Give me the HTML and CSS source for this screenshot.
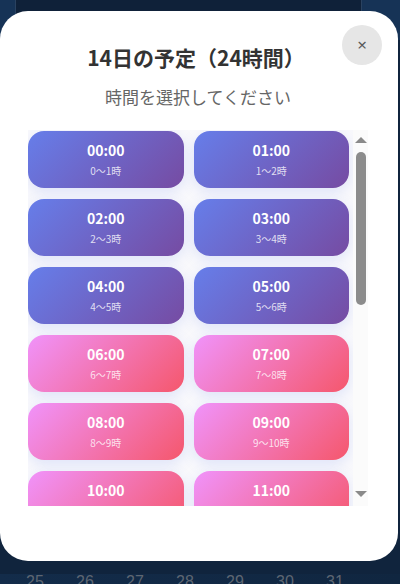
FILE: index.html
```html
<!DOCTYPE html>
<html lang="ja">
<head>
<meta charset="utf-8">
<title>14日の予定</title>
<link rel="stylesheet" href="styles.css">
</head>
<body>
<div class="page">
  <div class="top">
    <div class="column"></div>
  </div>
  <div class="spacer"></div>
  <div class="week">
    <span>25</span><span>26</span><span>27</span><span>28</span><span>29</span><span>30</span><span>31</span>
  </div>
</div>
<div class="overlay">
  <div class="modal">
    <button class="close">×</button>
    <h2 class="title">14日の予定（24時間）</h2>
    <p class="subtitle">時間を選択してください</p>
    <div class="list-wrap">
      <div class="slots">
        <div class="slot am"><span class="time">00:00</span><span class="range">0〜1時</span></div>
        <div class="slot am"><span class="time">01:00</span><span class="range">1〜2時</span></div>
        <div class="slot am"><span class="time">02:00</span><span class="range">2〜3時</span></div>
        <div class="slot am"><span class="time">03:00</span><span class="range">3〜4時</span></div>
        <div class="slot am"><span class="time">04:00</span><span class="range">4〜5時</span></div>
        <div class="slot am"><span class="time">05:00</span><span class="range">5〜6時</span></div>
        <div class="slot pm"><span class="time">06:00</span><span class="range">6〜7時</span></div>
        <div class="slot pm"><span class="time">07:00</span><span class="range">7〜8時</span></div>
        <div class="slot pm"><span class="time">08:00</span><span class="range">8〜9時</span></div>
        <div class="slot pm"><span class="time">09:00</span><span class="range">9〜10時</span></div>
        <div class="slot pm"><span class="time">10:00</span><span class="range">10〜11時</span></div>
        <div class="slot pm"><span class="time">11:00</span><span class="range">11〜12時</span></div>
        <div class="slot day"><span class="time">12:00</span><span class="range">12〜13時</span></div>
        <div class="slot day"><span class="time">13:00</span><span class="range">13〜14時</span></div>
        <div class="slot day"><span class="time">14:00</span><span class="range">14〜15時</span></div>
        <div class="slot day"><span class="time">15:00</span><span class="range">15〜16時</span></div>
        <div class="slot day"><span class="time">16:00</span><span class="range">16〜17時</span></div>
        <div class="slot day"><span class="time">17:00</span><span class="range">17〜18時</span></div>
        <div class="slot eve"><span class="time">18:00</span><span class="range">18〜19時</span></div>
        <div class="slot eve"><span class="time">19:00</span><span class="range">19〜20時</span></div>
        <div class="slot eve"><span class="time">20:00</span><span class="range">20〜21時</span></div>
        <div class="slot eve"><span class="time">21:00</span><span class="range">21〜22時</span></div>
        <div class="slot eve"><span class="time">22:00</span><span class="range">22〜23時</span></div>
        <div class="slot eve"><span class="time">23:00</span><span class="range">23〜24時</span></div>
      </div>
      <div class="scrollbar">
        <span class="arrow up"></span>
        <div class="track"><span class="thumb"></span></div>
        <span class="arrow down"></span>
      </div>
    </div>
  </div>
</div>
</body>
</html>
```
FILE: styles.css
```css
* { box-sizing: border-box; }
html, body { margin: 0; padding: 0; }
body {
  width: 400px;
  height: 584px;
  overflow: hidden;
  position: relative;
  font-family: "Noto Sans CJK JP", "Noto Sans", sans-serif;
  background: #112a47;
}
.page {
  height: 584px;
  display: flex;
  flex-direction: column;
  background: #11294a;
}
.top {
  height: 40px;
  padding: 0 38px 0 15px;
  display: flex;
  background: #163356;
}
.column {
  flex: 1;
  background: #0f2139;
  border-left: 1px solid #2a4260;
  border-right: 1px solid #2a4260;
}
.spacer { flex: 1; background: #10243d; }
.week {
  height: 10px;
  background: linear-gradient(90deg, #132c4a, #102640);
  display: flex;
  padding-left: 26px;
  gap: 32px;
  color: #5e6672;
  font-family: "Liberation Sans", sans-serif;
  font-size: 16px;
  line-height: 14px;
  overflow: hidden;
}
.week span { width: 18px; padding-top: 1px; }

.overlay {
  position: absolute;
  inset: 0;
}
.modal {
  position: absolute;
  left: 0;
  top: 11px;
  width: 398px;
  height: 550px;
  background: #ffffff;
  border-radius: 28px;
  padding: 32px 30px 0 28px;
  display: flex;
  flex-direction: column;
}
.close {
  position: absolute;
  top: 14px;
  right: 16px;
  width: 40px;
  height: 40px;
  border-radius: 50%;
  border: none;
  background: #e6e6e6;
  color: #5a5a5a;
  font-size: 17px;
  font-weight: 400;
  line-height: 40px;
  padding: 0;
  font-family: "Noto Sans", sans-serif;
}
.title {
  margin: 0;
  text-align: center;
  font-size: 21px;
  font-weight: 700;
  line-height: 28px;
  color: #333333;
  padding-right: 4px;
}
.subtitle {
  margin: 14px 0 0;
  text-align: center;
  font-size: 17px;
  line-height: 24px;
  color: #666666;
}
.list-wrap {
  margin-top: 21px;
  height: 376px;
  background: #f9f9fc;
  display: flex;
}
.slots {
  flex: 1;
  overflow: hidden;
  display: grid;
  grid-template-columns: 1fr 1fr;
  column-gap: 10px;
  row-gap: 11px;
  padding: 1px 4px 0 0;
  align-content: start;
}
.slot {
  height: 57px;
  border-radius: 16px;
  display: flex;
  flex-direction: column;
  align-items: center;
  color: #ffffff;
  box-shadow: 0 4px 14px rgba(102, 126, 234, 0.18);
}
.slot.am { background: linear-gradient(135deg, #667eea 0%, #764ba2 100%); }
.slot.pm { background: linear-gradient(135deg, #f093fb 0%, #f5576c 100%); }
.slot.day { background: linear-gradient(135deg, #4facfe 0%, #00c6fb 100%); }
.slot.eve { background: linear-gradient(135deg, #43e97b 0%, #38f9d7 100%); }
.time {
  margin-top: 9px;
  font-size: 14px;
  font-weight: 600;
  line-height: 20px;
}
.range {
  margin-top: 3px;
  font-size: 10px;
  line-height: 16px;
  color: rgba(255, 255, 255, 0.8);
}
.scrollbar {
  width: 15px;
  display: flex;
  flex-direction: column;
  align-items: center;
  background: #fbfbfb;
}
.arrow {
  width: 0;
  height: 0;
  border-left: 6px solid transparent;
  border-right: 6px solid transparent;
}
.arrow.up {
  margin-top: 7px;
  border-bottom: 6px solid #8a8a8a;
}
.arrow.down {
  margin-bottom: 9px;
  border-top: 6px solid #8a8a8a;
}
.track {
  flex: 1;
  width: 100%;
  display: flex;
  justify-content: center;
  padding-top: 9px;
}
.thumb {
  width: 10px;
  height: 153px;
  border-radius: 5px;
  background: #8c8c8c;
}
```
